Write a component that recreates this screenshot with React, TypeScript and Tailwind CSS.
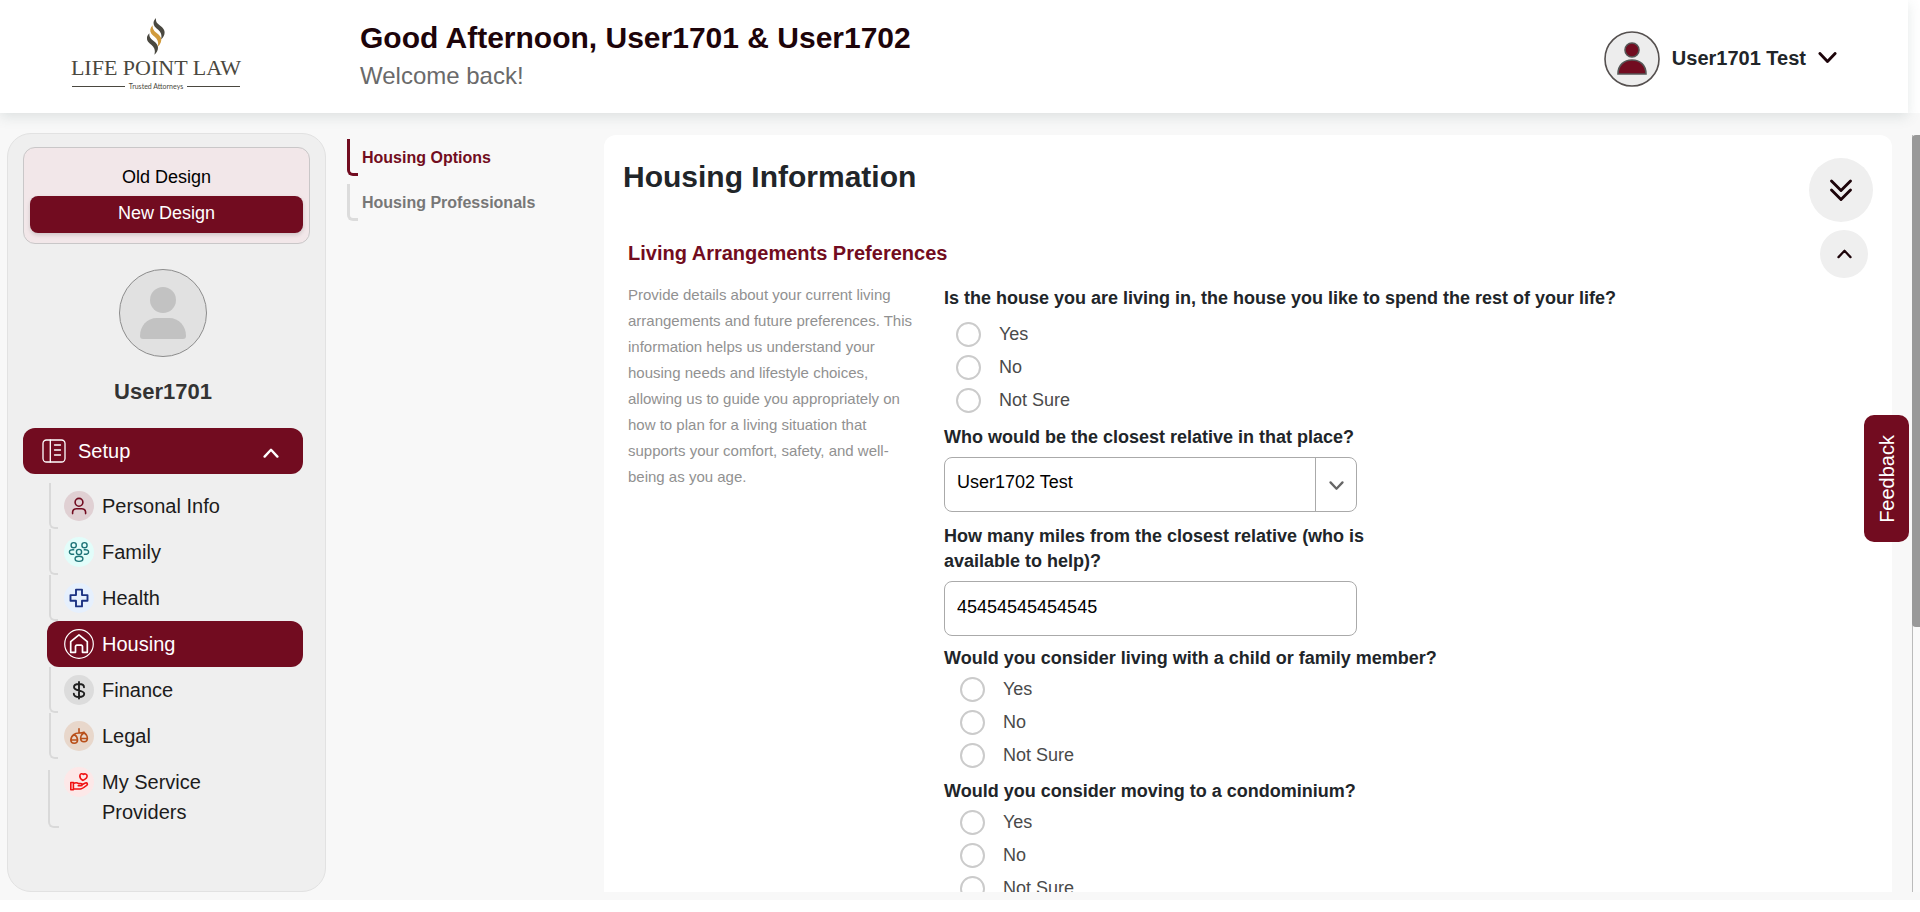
import type { ReactNode } from "react";

const brand = "#720c20";

function Chevron({ size, width, color, up }: { size: number; width: number; color: string; up?: boolean }) {
  return (
    <svg width={size} height={size / 2 + 2} viewBox="0 0 20 12" fill="none" stroke={color} strokeWidth={width} strokeLinecap="round" strokeLinejoin="round" aria-hidden="true">
      <path d={up ? "M2 10.5 10 2l8 8.5" : "M2 1.5 10 10l8-8.5"} />
    </svg>
  );
}

function Logo() {
  const flame = "M27 0C19 8 17 17 23 26C29 33 39 38 42 47C44 53 44 58 42 65C51 57 55 48 52 38C48 27 38 24 32 17C28 12 26 7 27 0Z";
  return (
    <div className="flex w-[168px] flex-col items-center text-[#4a4840]">
      <svg width="18" height="37" viewBox="0 0 54 112" aria-hidden="true">
        <path d={flame} fill="#4a4840" />
        <path d={flame} fill="#d09a3c" transform="translate(-10 22)" />
        <path d={flame} fill="#4a4840" transform="translate(-20 46)" />
      </svg>
      <div className="font-['Liberation_Serif',serif] text-[22px] leading-[25px] whitespace-nowrap">LIFE POINT LAW</div>
      <div className="mt-px flex w-full items-center gap-1 font-[Lato,sans-serif] text-[7px] leading-[11px]">
        <span className="h-px flex-1 bg-[#4a4840]" />
        <span>Trusted Attorneys</span>
        <span className="h-px flex-1 bg-[#4a4840]" />
      </div>
    </div>
  );
}

function Header() {
  return (
    <header className="relative mr-3 flex h-[113px] shrink-0 items-start bg-white shadow-[0_4px_12px_rgba(90,110,110,0.16)]">
      <div className="flex w-[360px] shrink-0 pt-[18px] pl-[72px]">
        <Logo />
      </div>
      <div className="flex-1 pt-5">
        <h1 className="text-[30px] leading-9 font-bold text-[#1d040a]">Good Afternoon, User1701 &amp; User1702</h1>
        <p className="mt-1 text-2xl leading-8 text-[#6a6a6a]">Welcome back!</p>
      </div>
      <button type="button" className="mt-[31px] mr-[71px] flex h-14 items-center gap-3">
        <svg width="56" height="56" viewBox="0 0 56 56" aria-hidden="true">
          <circle cx="28" cy="28" r="27" fill="#ededed" stroke="#55504f" strokeWidth="1.6" />
          <circle cx="28" cy="19" r="7" fill={brand} stroke="#555" strokeWidth="1.6" />
          <path d="M14 43c0-9 6-14 14-14s14 5 14 14z" fill={brand} stroke="#555" strokeWidth="1.6" />
        </svg>
        <span className="flex items-center gap-3 pb-0.5 text-xl font-bold whitespace-nowrap text-[#212529]">
          User1701 Test
          <Chevron size={19} width={3} color="#1d040a" />
        </span>
      </button>
    </header>
  );
}

type Item = { label: string; bg: string; color: string; icon: ReactNode; active?: boolean; tall?: boolean };

const items: Item[] = [
  {
    label: "Personal Info",
    bg: "bg-[#e0d0d3]",
    color: brand,
    icon: (
      <>
        <circle cx="15" cy="11.3" r="3.9" />
        <path d="M8.6 22.6v-1.4a3.800 3.800 0 0 1 3.800-3.400h5.400a3.800 3.800 0 0 1 3.800 3.400v1.400" />
      </>
    ),
  },
  {
    label: "Family",
    bg: "bg-[#e2fdfa]",
    color: "#1d7377",
    icon: (
      <g strokeWidth="1.4">
        <circle cx="9.7" cy="8.2" r="2.6" />
        <circle cx="20.5" cy="8.2" r="2.6" />
        <circle cx="15" cy="15" r="2.6" />
        <ellipse cx="15" cy="21.8" rx="3.9" ry="2.6" />
        <path d="M9.700 12.800c-2.700-.3-4.300.7-4.300 2.200s1.600 2.500 4.300 2.200M20.300 12.800c2.700-.3 4.300.7 4.300 2.200s-1.600 2.500-4.300 2.200" />
      </g>
    ),
  },
  {
    label: "Health",
    bg: "bg-[#e6f0fd]",
    color: "#1c3282",
    icon: <path strokeWidth="1.9" d="M12 6.600h6v5.500h5.500v5.700H18v5.600h-6v-5.600H6.500v-5.700H12z" />,
  },
  {
    label: "Housing",
    bg: "bg-transparent",
    color: "#ffffff",
    active: true,
    icon: (
      <>
        <circle cx="15" cy="15" r="14.3" strokeWidth="1.2" />
        <path strokeWidth="1.7" d="M6.700 23.300V12.600L15 5.900l8.300 6.700v10.700h-4.800v-5.900a1.300 1.300 0 0 0-1.300-1.300h-4.400a1.300 1.300 0 0 0-1.300 1.300v5.900z" />
      </>
    ),
  },
  {
    label: "Finance",
    bg: "bg-[#dcdcdc]",
    color: "#1f1f1f",
    icon: <path strokeWidth="1.9" d="M15 7v16.500M20 12.200c0-2-1.900-3.200-5-3.200s-5 1.200-5 3.100c0 4.700 10.200 2.300 10.200 6.700 0 2-2 3.200-5.200 3.200s-5.200-1.200-5.200-3.300" />,
  },
  {
    label: "Legal",
    bg: "bg-[#e8d7cb]",
    color: "#b9501b",
    icon: (
      <g strokeWidth="1.6">
        <path d="M15 7.800v4.200M10 13.500c1.400-1.500 2.600-1.500 5-1.500s3.600 0 5-.8" />
        <path d="M10.200 13.500c-1.800 1-3.200 3-3.400 5.500h6.800c-.2-2.500-1.600-4.500-3.400-5.500zM6.800 19c.2 4.400 6.600 4.400 6.800 0M20 11.700c-1.800 1-3.200 3.200-3.400 5.800h6.800c-.2-2.600-1.600-4.800-3.400-5.800zM16.600 17.500c.2 4.400 6.600 4.400 6.800 0" />
      </g>
    ),
  },
  {
    label: "My Service Providers",
    bg: "bg-[#fde8e8]",
    color: "#f01212",
    tall: true,
    icon: (
      <g strokeWidth="1.6">
        <path d="M18.700 13.400c-2.200-1.600-3.200-3.300-2.800-5 .4-1.700 2.300-2.200 3.500-1 1.200-.9 3.200-.6 3.600.9.500 2-1.500 4-4.300 5.100z" />
        <path d="M6.800 15.500h2.600v7.300H6.800zM9.400 16.500c2.200-1.200 3.800-1 5.200.1h2.300c1.700 0 1.700 2.100 0 2.100h-2.700M17.900 17.700l3.500-1.600c1.900-.7 2.700 1.100 1.300 2.200-2.200 1.800-4.300 3.700-6.500 3.700H9.400" />
      </g>
    ),
  },
];

function Sidebar() {
  return (
    <aside className="flex w-[319px] shrink-0 flex-col rounded-3xl border border-[#e2e2e2] bg-[#efefef] px-[15px] pt-[13px]">
      <div className="flex flex-col rounded-xl border border-[#c9c7c8] bg-[#f2e7e9] px-1.5 py-2.5 text-lg text-black">
        <button type="button" className="h-[38px] rounded-lg">Old Design</button>
        <button type="button" className="h-[37px] rounded-lg bg-[#720c20] pb-1 text-white shadow-[0_2px_4px_rgba(0,0,0,0.15)]">New Design</button>
      </div>
      <div className="mt-[25px] mr-[7px] flex flex-col items-center">
        <svg width="88" height="88" viewBox="0 0 88 88" aria-hidden="true">
          <circle cx="44" cy="44" r="43.500" fill="#e1e1e1" stroke="#8c8c8c" />
          <circle cx="44" cy="31" r="13" fill="#c2c2c2" />
          <path d="M21 67c0-10 7-18 17-18h12c10 0 17 8 17 18 0 2-1 3-3 3H24c-2 0-3-1-3-3z" fill="#c2c2c2" />
        </svg>
        <h2 className="mt-5 text-[22px] leading-[30px] font-bold text-[#333]">User1701</h2>
      </div>
      <nav aria-label="Setup" className="mt-[21px] mr-[7px] text-xl">
        <button type="button" className="flex h-[46px] w-full items-center rounded-xl bg-[#720c20] pr-6 pl-[19px] text-white">
          <svg width="24" height="24" viewBox="0 0 24 24" fill="none" stroke="#fff" strokeWidth="1.300" strokeLinecap="round" aria-hidden="true">
            <rect x="1" y="1" width="22" height="22" rx="3.500" />
            <path d="M8.300 1v22M12.500 6h6M12.500 11h6M12.500 16h6" />
          </svg>
          <span className="ml-3 flex-1 text-left">Setup</span>
          <span className="pt-1">
            <Chevron size={16} width={3} color="#fff" up />
          </span>
        </button>
        <ul className="mt-[9px] ml-6">
          {items.map((it) => (
            <li key={it.label} className="relative">
              {!it.active && (
                <span className={`absolute rounded-bl-md border-b-2 border-l-2 border-[#d9d9d9] ${it.tall ? "top-[11px] bottom-[7px] left-px w-[11px]" : "top-0 bottom-0 left-0.5 w-[9px]"}`} />
              )}
              <a href="#" className={`flex items-start gap-2 rounded-xl py-2 pl-[17px] ${it.active ? "bg-[#720c20] text-white" : "text-[#1c1c1c]"}`}>
                <span className={`h-[30px] w-[30px] shrink-0 rounded-full ${it.bg}`}>
                  <svg width="30" height="30" viewBox="0 0 30 30" fill="none" stroke={it.color} strokeWidth="1.600" strokeLinecap="round" strokeLinejoin="round" aria-hidden="true">
                    {it.icon}
                  </svg>
                </span>
                <span className="w-[130px] leading-[30px]">{it.label}</span>
              </a>
            </li>
          ))}
        </ul>
      </nav>
    </aside>
  );
}

function SubNav() {
  return (
    <nav aria-label="Housing" className="ml-[21px] flex w-[257px] shrink-0 flex-col gap-2 pt-1.5 text-base font-bold">
      <a href="#" className="relative flex h-[37px] items-center pl-[15px] text-[#720c20]">
        <span className="absolute inset-y-0 left-0 w-[11px] rounded-bl-md border-b-3 border-l-3 border-[#720c20]" />
        Housing Options
      </a>
      <a href="#" className="relative flex h-[37px] items-center pl-[15px] text-[#777]">
        <span className="absolute inset-y-0 left-0 w-[11px] rounded-bl-md border-b-3 border-l-3 border-[#dcdcdc]" />
        Housing Professionals
      </a>
    </nav>
  );
}

function RadioGroup({ name, question, className, listClass }: { name: string; question: string; className: string; listClass: string }) {
  return (
    <fieldset className={className}>
      <legend className="leading-[25px] font-bold whitespace-nowrap">{question}</legend>
      <div className={listClass}>
        {["Yes", "No", "Not Sure"].map((o) => (
          <label key={o} className="flex h-[33px] items-center gap-[18px] text-[#4a4a4a]">
            <input type="radio" name={name} value={o} className="h-[25px] w-[25px] appearance-none rounded-full border-2 border-[#cbcbcb] bg-white checked:border-8 checked:border-[#720c20]" />
            {o}
          </label>
        ))}
      </div>
    </fieldset>
  );
}

function Content() {
  return (
    <main className="flex-1 overflow-hidden rounded-t-xl bg-white pt-[23px] text-[#212529]">
      <div className="flex items-start justify-between pr-[19px] pl-[19px]">
        <h2 className="pt-px text-[30px] leading-9 font-bold">Housing Information</h2>
        <button type="button" aria-label="Expand all sections" className="flex size-16 items-center justify-center rounded-full bg-[#efefef]">
          <svg width="24" height="24" viewBox="0 0 24 24" fill="none" stroke="#1d040a" strokeWidth="2.900" strokeLinecap="round" strokeLinejoin="round" aria-hidden="true">
            <path d="m2.500 3 9.500 9.500L21.500 3M2.500 12l9.500 9.500L21.500 12" />
          </svg>
        </button>
      </div>
      <section className="mt-2 px-6">
        <div className="flex h-12 items-center justify-between">
          <h3 className="pb-0.5 text-xl font-bold text-[#720c20]">Living Arrangements Preferences</h3>
          <button type="button" aria-label="Collapse section" className="flex size-12 items-center justify-center rounded-full bg-[#efefef]">
            <Chevron size={15} width={3} color="#1d040a" up />
          </button>
        </div>
        <div className="flex items-start gap-[26px]">
          <p className="w-[290px] shrink-0 pt-1 text-[15px] leading-[26px] text-[#919191]">
            Provide details about your current living arrangements and future preferences. This information helps us understand your housing needs and lifestyle choices, allowing us to guide you appropriately on how to plan for a living situation that supports your comfort, safety, and well-being as you age.
          </p>
          <form className="min-w-0 flex-1 pt-2 text-lg leading-[25px]">
            <RadioGroup name="stay" question="Is the house you are living in, the house you like to spend the rest of your life?" className="" listClass="pt-[7px] pl-3" />
            <div className="mt-2 w-[424px]">
              <label htmlFor="relative" className="block font-bold">Who would be the closest relative in that place?</label>
              <div className="relative mt-[7px] w-[413px]">
                <select id="relative" className="h-[55px] w-full appearance-none rounded-lg border border-[#aaa] bg-white px-3 pb-[5px] text-lg text-black">
                  <option>User1702 Test</option>
                </select>
                <span className="pointer-events-none absolute inset-y-0 right-0 flex w-[42px] items-center justify-center border-l border-[#aaa] pt-0.5">
                  <Chevron size={15} width={3} color="#666" />
                </span>
              </div>
            </div>
            <div className="mt-3 w-[424px]">
              <label htmlFor="miles" className="block font-bold">How many miles from the closest relative (who is available to help)?</label>
              <input id="miles" type="text" defaultValue="45454545454545" className="mt-[7px] block h-[55px] w-[413px] rounded-lg border border-[#aaa] bg-white px-3 pb-0.5 text-lg text-black" />
            </div>
            <RadioGroup name="family" question="Would you consider living with a child or family member?" className="mt-2.5" listClass="pt-0.5 pl-4" />
            <RadioGroup name="condo" question="Would you consider moving to a condominium?" className="mt-[7px]" listClass="pt-0.5 pl-4" />
          </form>
        </div>
      </section>
    </main>
  );
}

export default function App() {
  return (
    <div className="flex h-screen flex-col overflow-hidden bg-white pb-3 font-['Liberation_Sans',Arial,sans-serif]">
      <Header />
      <div className="flex min-h-0 flex-1 bg-[#f8f8f8] pb-2 pl-[7px]">
        <div className="flex pt-5">
          <Sidebar />
        </div>
        <div className="flex pt-5">
          <SubNav />
        </div>
        <div className="flex min-w-0 flex-1 pt-[22px]">
          <Content />
          <div className="ml-5 w-2 shrink-0 border-l border-[#bbb] bg-[#fafafa]">
            <div className="-ml-px h-[65%] rounded-l bg-[#999]" />
          </div>
        </div>
      </div>
      <button type="button" className="fixed top-[415px] right-[11px] flex h-[127px] w-[45px] items-center justify-center rounded-[10px] bg-[#720c20] text-xl text-white">
        <span className="rotate-180 [writing-mode:vertical-rl]">Feedback</span>
      </button>
    </div>
  );
}
